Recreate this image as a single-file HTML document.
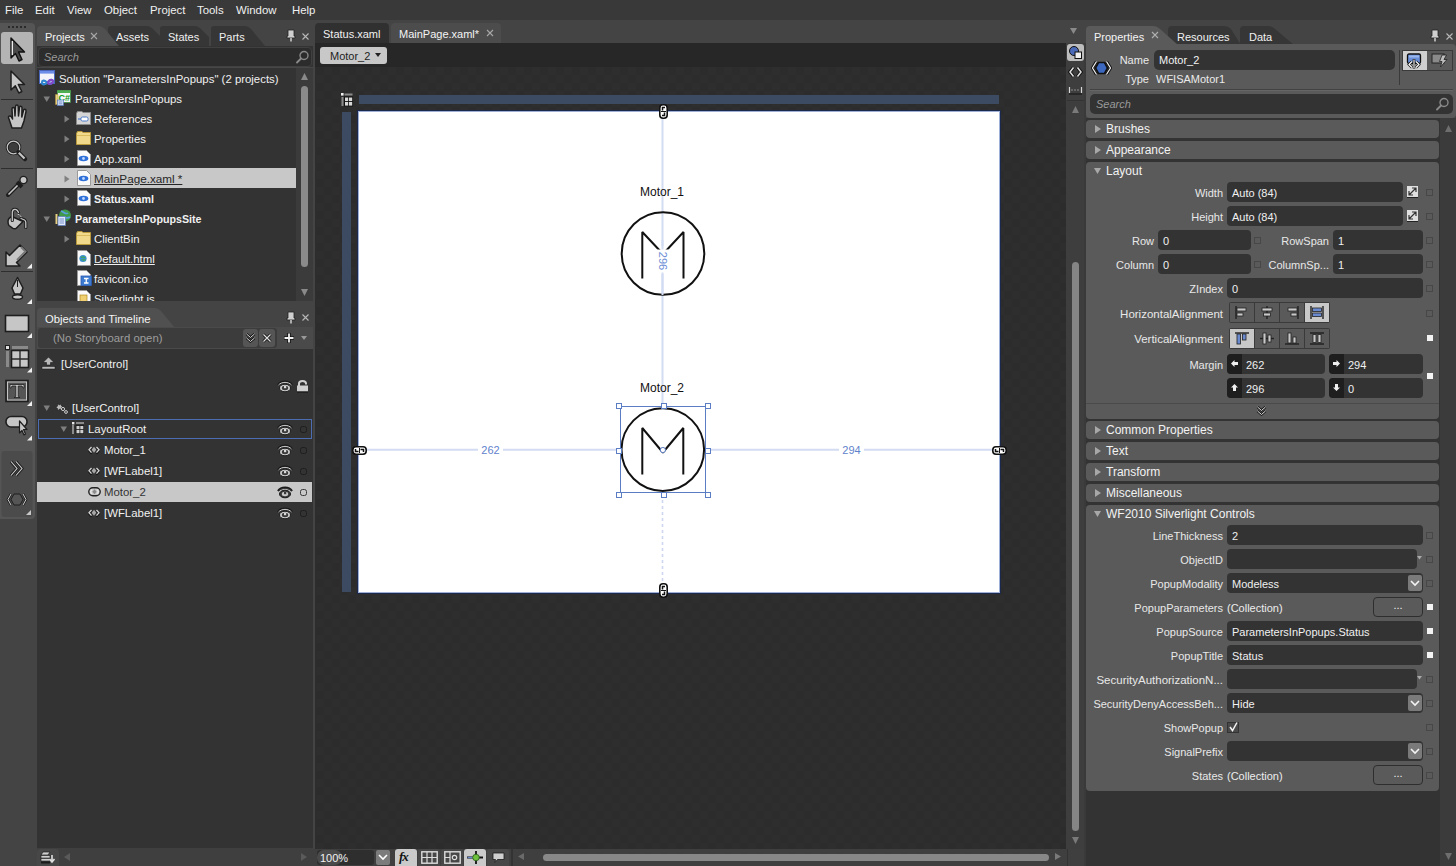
<!DOCTYPE html>
<html><head><meta charset="utf-8">
<style>
*{box-sizing:border-box}
body{margin:0;width:1456px;height:866px;overflow:hidden;background:#444444;font-family:"Liberation Sans",sans-serif;font-size:11px;color:#f0f0f0;position:relative}
.a{position:absolute}
.t{position:absolute;white-space:nowrap;line-height:14px}
.menu span{position:absolute;top:3px;line-height:14px;color:#f0f0f0;font-size:11.4px}
.chk{background-color:#2c2c2c;background-image:linear-gradient(45deg,#2e2e2e 25%,transparent 25%,transparent 75%,#2e2e2e 75%),linear-gradient(45deg,#2e2e2e 25%,transparent 25%,transparent 75%,#2e2e2e 75%);background-size:16px 16px;background-position:1px 0,9px 8px}
</style></head><body>

<!-- menu bar -->
<div class="a menu" style="left:0;top:0;width:1456px;height:20px;background:#393939">
<span style="left:5px">File</span><span style="left:35px">Edit</span><span style="left:67px">View</span><span style="left:104px">Object</span><span style="left:150px">Project</span><span style="left:197px">Tools</span><span style="left:236px">Window</span><span style="left:292px">Help</span>
</div>

<!-- left toolbar -->
<div class="a" style="left:0;top:23px;width:35px;height:496px;background:#555555;border-radius:0 4px 4px 0"></div>
<svg class="a" style="left:0;top:0" width="36" height="520" viewBox="0 0 36 520">
<g fill="#2a2a2a"><rect x="8" y="26" width="2" height="2"/><rect x="12" y="26" width="2" height="2"/><rect x="16" y="26" width="2" height="2"/><rect x="20" y="26" width="2" height="2"/><rect x="24" y="26" width="2" height="2"/></g>
<rect x="1" y="32" width="32" height="32" rx="3" fill="#b4b4b4"/>
<path d="M11 38 L11 58 L15.5 53.5 L19 61 L22 59.5 L18.5 52 L24.5 52 Z" fill="#4a4a4a" stroke="#111" stroke-width="1.4" stroke-linejoin="round"/>
<path d="M12.3 41 L12.3 55" stroke="#fff" stroke-width="1.2"/>
<path d="M11 71 L11 90 L15.3 85.8 L18.8 93 L21.8 91.5 L18.3 84.5 L24.5 84.5 Z" fill="#c6c6c6" stroke="#1e1e1e" stroke-width="1.5" stroke-linejoin="round"/>
<rect x="1" y="99" width="32" height="1" fill="#2e2e2e"/>
<path d="M12 128 L9 119 C7.5 116 10 115 11.5 117 L12.5 119 L12 109 C12 107 14.5 107 14.6 109 L15 116 L15.5 106.5 C15.7 104.5 18 104.5 18.2 106.5 L18.5 116 L19.5 107.5 C19.8 105.5 22 105.8 22 108 L21.8 117 L23.5 110.5 C24 108.5 26.5 109 26 111.5 L24 121 L21.5 128 Z" fill="#c6c6c6" stroke="#1e1e1e" stroke-width="1.5" stroke-linejoin="round"/>
<circle cx="13.5" cy="147.5" r="6.3" fill="#3c3c3c" stroke="#1e1e1e" stroke-width="3"/>
<circle cx="13.5" cy="147.5" r="6.3" fill="none" stroke="#c6c6c6" stroke-width="1.2"/>
<path d="M18.5 152.5 L25 159" stroke="#1e1e1e" stroke-width="4.5" stroke-linecap="round"/>
<path d="M18.8 152.8 L24.5 158.5" stroke="#c6c6c6" stroke-width="2.2"/>
<rect x="1" y="168" width="32" height="1" fill="#2e2e2e"/>
<path d="M8 195 L19 184" stroke="#1e1e1e" stroke-width="4" stroke-linecap="round"/>
<path d="M8.5 194.5 L19 184" stroke="#c6c6c6" stroke-width="1.6"/>
<path d="M17 182 L22 187" stroke="#1e1e1e" stroke-width="4"/>
<circle cx="23.5" cy="180" r="3.6" fill="#c6c6c6" stroke="#1e1e1e" stroke-width="1.4"/>
<path d="M21 218.5 L24.5 220 C25.5 220.5 25.8 221.5 25.8 222.5 L25.8 227.5" fill="none" stroke="#1e1e1e" stroke-width="3.2" stroke-linecap="round"/>
<path d="M21 218.5 L24.5 220 C25.5 220.5 25.8 221.5 25.8 222.5 L25.8 227.5" fill="none" stroke="#c6c6c6" stroke-width="1.3" stroke-linecap="round"/>
<path d="M8 221.5 C8 219 9.5 217.5 12 216.5 L23 221.5 L16.5 228 C15.5 229 14 229 12.5 228.2 L9 225.5 C8.3 224.5 8 223 8 221.5 Z" fill="#c6c6c6" stroke="#1e1e1e" stroke-width="1.5" stroke-linejoin="round"/>
<path d="M12.3 220.5 L12.3 212.5 C12.3 208.5 17 208 18.5 212.5" fill="none" stroke="#1e1e1e" stroke-width="3.2" stroke-linecap="round"/>
<path d="M12.3 220.5 L12.3 212.5 C12.3 208.5 17 208 18.5 212.5" fill="none" stroke="#c6c6c6" stroke-width="1.3" stroke-linecap="round"/>
<path d="M17.5 214 L19.5 215 M20 215.8 L21.5 216.8" stroke="#c6c6c6" stroke-width="1"/>
<path d="M6 262 L6 252 L9.5 255.5 L20 245 L27 252 L16.5 262.5 L20 266 L6 266 Z" fill="#c6c6c6" stroke="#1e1e1e" stroke-width="1.5" stroke-linejoin="round"/>
<path d="M21 247 L25.5 251.5 L17 260" fill="none" stroke="#777" stroke-width="2"/>
<path d="M32 263.5 L32 268.5 L27 268.5 Z" fill="#f0f0f0"/>
<rect x="1" y="271" width="32" height="1" fill="#2e2e2e"/>
<path d="M17.5 277.5 L23 288 L20.5 294 L14.5 294 L12 288 Z" fill="#c6c6c6" stroke="#1e1e1e" stroke-width="1.5" stroke-linejoin="round"/>
<path d="M17.5 280 L17.5 287" stroke="#1e1e1e" stroke-width="1"/>
<ellipse cx="17.5" cy="297" rx="5" ry="2.2" fill="#c6c6c6" stroke="#1e1e1e" stroke-width="1.4"/>
<path d="M32 299 L32 304 L27 304 Z" fill="#f0f0f0"/>
<rect x="5.5" y="315.5" width="23" height="16" fill="#c6c6c6" stroke="#1e1e1e" stroke-width="1.6"/>
<path d="M32 333 L32 338 L27 338 Z" fill="#f0f0f0"/>
<rect x="11.5" y="350.5" width="17" height="17" fill="#c6c6c6" stroke="#1e1e1e" stroke-width="1.6"/>
<path d="M20 351 L20 367 M12 359 L28 359" stroke="#2a2a2a" stroke-width="1.4"/>
<rect x="12" y="346" width="16" height="3" fill="#8a8a8a"/>
<rect x="6" y="351" width="3" height="16" fill="#8a8a8a"/>
<rect x="5.5" y="345.5" width="4" height="4" fill="#e0e0e0" stroke="#1e1e1e" stroke-width="1"/>
<path d="M32 367.5 L32 372.5 L27 372.5 Z" fill="#f0f0f0"/>
<rect x="6" y="380.5" width="22" height="21" fill="none" stroke="#1e1e1e" stroke-width="1.6"/>
<rect x="7.5" y="382" width="19" height="18" fill="none" stroke="#c6c6c6" stroke-width="1"/>
<path d="M10 384.5 L24 384.5 L24 388 L23 388 L22 386 L18.2 386 L18.2 396.5 L20 397.5 L14 397.5 L15.8 396.5 L15.8 386 L12 386 L11 388 L10 388 Z" fill="#c6c6c6" stroke="#1e1e1e" stroke-width="0.8"/>
<path d="M32 401 L32 406 L27 406 Z" fill="#f0f0f0"/>
<rect x="6" y="416.5" width="21" height="10.5" rx="5" fill="#c6c6c6" stroke="#1e1e1e" stroke-width="1.6"/>
<path d="M19.5 421 L19.5 433 L22 430.5 L24 435 L25.5 434 L23.5 429.5 L27 429.5 Z" fill="#c6c6c6" stroke="#1e1e1e" stroke-width="1.2" stroke-linejoin="round"/>
<path d="M32 435.5 L32 440.5 L27 440.5 Z" fill="#f0f0f0"/>
<rect x="1.5" y="451" width="31" height="66" rx="3" fill="#4b4b4b"/>
<path d="M11 461.5 L17 468.5 L11 475.5 M16 461.5 L22 468.5 L16 475.5" fill="none" stroke="#1e1e1e" stroke-width="3"/>
<path d="M11 461.5 L17 468.5 L11 475.5 M16 461.5 L22 468.5 L16 475.5" fill="none" stroke="#d0d0d0" stroke-width="1.1"/>
<path d="M11 499.5 L14 494 L20 494 L23 499.5 L20 505 L14 505 Z" fill="#555" stroke="#1e1e1e" stroke-width="1"/>
<path d="M11 494 L8 499.5 L11 505 M23 494 L26 499.5 L23 505" fill="none" stroke="#1e1e1e" stroke-width="2.6"/>
<path d="M11 494 L8 499.5 L11 505 M23 494 L26 499.5 L23 505" fill="none" stroke="#d0d0d0" stroke-width="1"/>
<path d="M31 510 L31 515 L26 515 Z" fill="#c8c8c8"/>
</svg>

<!-- Projects panel -->
<div class="a" style="left:37px;top:46px;width:276px;height:255px;background:#333333"></div>
<svg class="a" style="left:37px;top:25px" width="240" height="22" viewBox="0 0 240 22">
<path d="M71 21 L71 4 Q71 1 74 1 L110 1 Q113 1 116 4 L124 12 L124 21 Z" fill="#363636"/>
<path d="M123 21 L123 4 Q123 1 126 1 L158 1 Q161 1 164 4 L172 12 L172 21 Z" fill="#363636"/>
<path d="M174 21 L174 4 Q174 1 177 1 L208 1 Q211 1 214 4 L228 21 Z" fill="#363636"/>
<path d="M0 21 L0 5 Q0 1 4 1 L62 1 Q65 1 68 4 L82 21 Z" fill="#505050"/>
</svg>
<div class="t" style="left:45px;top:30px;color:#f4f4f4">Projects</div>
<svg class="a" style="left:90px;top:32px" width="8" height="8"><path d="M1 1 L7 7 M7 1 L1 7" stroke="#a8a8a8" stroke-width="1.1"/></svg>
<div class="t" style="left:116px;top:30px;color:#f0f0f0">Assets</div>
<div class="t" style="left:168px;top:30px;color:#f0f0f0">States</div>
<div class="t" style="left:219px;top:30px;color:#f0f0f0">Parts</div>
<svg class="a" style="left:286px;top:29px" width="10" height="13" viewBox="0 0 10 13"><path d="M2 1 L8 1 L8 7 L9 7 L9 9 L1 9 L1 7 L2 7 Z" fill="#d0d0d0" stroke="#222" stroke-width="0.8"/><path d="M5 9 L5 12.5" stroke="#d0d0d0" stroke-width="1.5"/></svg>
<svg class="a" style="left:301px;top:32px" width="9" height="9"><path d="M1.5 1.5 L7.5 7.5 M7.5 1.5 L1.5 7.5" stroke="#b8b8b8" stroke-width="1.1"/></svg>
<div class="a" style="left:38px;top:47px;width:274px;height:20px;background:#2c2c2c;border:1px solid #404040;border-radius:4px"></div>
<div class="a" style="left:37px;top:67px;width:276px;height:1px;background:#474747"></div>
<div class="t" style="left:44px;top:50px;color:#9a9a9a;font-style:italic">Search</div>
<svg class="a" style="left:296px;top:50px" width="13" height="14" viewBox="0 0 13 14"><circle cx="8" cy="5.5" r="4" fill="none" stroke="#8a8a8a" stroke-width="1.4"/><path d="M5 8.5 L1 12.5" stroke="#8a8a8a" stroke-width="1.8" stroke-linecap="round"/></svg>
<div class="a" style="left:296px;top:68px;width:17px;height:233px;background:#3b3b3b"></div>
<svg class="a" style="left:301px;top:73px" width="8" height="8"><path d="M0 7 L3.5 0 L7 7 Z" fill="#8a8a8a"/></svg>
<div class="a" style="left:301px;top:86px;width:7px;height:181px;background:#8a8a8a;border-radius:3.5px"></div>
<svg class="a" style="left:301px;top:289px" width="8" height="8"><path d="M0 0 L7 0 L3.5 7 Z" fill="#8a8a8a"/></svg>
<div class="a" style="left:37px;top:168px;width:259px;height:20px;background:#c8c8c8"></div>
<div class="a" style="left:37px;top:68px;width:259px;height:233px;overflow:hidden;font-size:11.4px">
<svg class="a" style="left:2px;top:2px" width="17" height="17" viewBox="0 0 17 17"><rect x="0.5" y="0.5" width="15" height="13" fill="#f2f4fa" stroke="#4a64b8"/><rect x="1" y="1" width="14" height="2.6" fill="#6d8ee8"/><path d="M3 12.5 C3 10.3 5.5 10 7.5 12 C9.5 14 12 14.5 13.5 12.5 C15 10.5 12.5 9 10.5 10.5 L8.5 12.5 C6 15 3 14.8 3 12.5 Z" fill="none" stroke="#2f86d0" stroke-width="2.2"/><path d="M8.5 12.5 L10.5 10.5 C12.5 9 15 10.5 13.5 12.5 C12 14.5 9.5 14 8.5 12.8" fill="none" stroke="#8248c8" stroke-width="2.2"/></svg>
<div class="t" style="left:22px;top:4px">Solution "ParametersInPopups" (2 projects)</div>
<svg class="a" style="left:6px;top:28px" width="8" height="7"><path d="M0.5 0.5 L7 0.5 L3.75 6 Z" fill="#7e7e7e"/></svg>
<svg class="a" style="left:18px;top:22px" width="16" height="16" viewBox="0 0 16 16"><rect x="2.5" y="0.5" width="13" height="12" fill="#f4f8f4" stroke="#3f8a3f" stroke-width="0.8"/><rect x="2.5" y="0.5" width="13" height="2.5" fill="#4fae4f"/><text x="3.6" y="10.5" font-family="Liberation Sans" font-weight="bold" font-size="9" fill="#129a12">C#</text><path d="M0.5 4.5 L3 4.5 L3 14.5 L0.5 14.5 Z" fill="#e6cf80" stroke="#b8983c" stroke-width="0.5"/><rect x="2.5" y="10" width="6" height="5.5" fill="#d0dcf2" stroke="#5a7ac0" stroke-width="0.7"/><path d="M3.8 12 L7.2 12 M3.8 13.8 L7.2 13.8" stroke="#5a7ac0" stroke-width="0.7"/></svg>
<div class="t" style="left:38px;top:24px">ParametersInPopups</div>
<svg class="a" style="left:27px;top:47px" width="7" height="8"><path d="M0.5 0.5 L5.5 4 L0.5 7.5 Z" fill="#7e7e7e"/></svg>
<svg class="a" style="left:39px;top:43px" width="15" height="14" viewBox="0 0 15 14"><path d="M0.5 2.5 L0.5 13.5 L14.5 13.5 L14.5 1.5 L7 1.5 L6 0.5 L1.5 0.5 Z" fill="#d4d4d4" stroke="#8a8a8a"/><rect x="5" y="6" width="7" height="4" rx="1.5" fill="#fff" stroke="#4a7ac8"/><path d="M2 8 L5 8" stroke="#4a7ac8" stroke-width="1.2"/></svg>
<div class="t" style="left:57px;top:44px">References</div>
<svg class="a" style="left:27px;top:67px" width="7" height="8"><path d="M0.5 0.5 L5.5 4 L0.5 7.5 Z" fill="#7e7e7e"/></svg>
<svg class="a" style="left:39px;top:63px" width="15" height="14" viewBox="0 0 15 14"><path d="M0.5 2.5 L0.5 13.5 L14.5 13.5 L14.5 1.5 L7 1.5 L6 0.5 L1.5 0.5 Z" fill="#f0d98a" stroke="#b89a3c"/><path d="M1 4.5 L14 4.5" stroke="#d8bb5c"/></svg>
<div class="t" style="left:57px;top:64px">Properties</div>
<svg class="a" style="left:27px;top:87px" width="7" height="8"><path d="M0.5 0.5 L5.5 4 L0.5 7.5 Z" fill="#7e7e7e"/></svg>
<svg class="a" style="left:40px;top:82px" width="14" height="16" viewBox="0 0 14 16"><path d="M0.5 0.5 L9.5 0.5 L13.5 4.5 L13.5 15.5 L0.5 15.5 Z" fill="#fafafa" stroke="#9a9a9a"/><ellipse cx="6.5" cy="8.5" rx="4.8" ry="2.8" fill="#2f6fd8"/><circle cx="6.5" cy="8.5" r="1.4" fill="#bcd8ff"/></svg>
<div class="t" style="left:57px;top:84px">App.xaml</div>
<svg class="a" style="left:27px;top:107px" width="7" height="8"><path d="M0.5 0.5 L5.5 4 L0.5 7.5 Z" fill="#808080"/></svg>
<svg class="a" style="left:40px;top:102px" width="14" height="16" viewBox="0 0 14 16"><path d="M0.5 0.5 L9.5 0.5 L13.5 4.5 L13.5 15.5 L0.5 15.5 Z" fill="#fafafa" stroke="#9a9a9a"/><ellipse cx="6.5" cy="8.5" rx="4.8" ry="2.8" fill="#2f6fd8"/><circle cx="6.5" cy="8.5" r="1.4" fill="#bcd8ff"/></svg>
<div class="t" style="left:57px;top:104px;color:#262626;text-decoration:underline;font-size:11.7px">MainPage.xaml *</div>
<svg class="a" style="left:27px;top:127px" width="7" height="8"><path d="M0.5 0.5 L5.5 4 L0.5 7.5 Z" fill="#7e7e7e"/></svg>
<svg class="a" style="left:40px;top:122px" width="14" height="16" viewBox="0 0 14 16"><path d="M0.5 0.5 L9.5 0.5 L13.5 4.5 L13.5 15.5 L0.5 15.5 Z" fill="#fafafa" stroke="#9a9a9a"/><ellipse cx="6.5" cy="8.5" rx="4.8" ry="2.8" fill="#2f6fd8"/><circle cx="6.5" cy="8.5" r="1.4" fill="#bcd8ff"/></svg>
<div class="t" style="left:57px;top:124px;font-weight:bold;font-size:10.7px">Status.xaml</div>
<svg class="a" style="left:6px;top:148px" width="8" height="7"><path d="M0.5 0.5 L7 0.5 L3.75 6 Z" fill="#7e7e7e"/></svg>
<svg class="a" style="left:18px;top:141px" width="16" height="17" viewBox="0 0 16 17"><circle cx="10" cy="6.5" r="6" fill="#3f9a4a"/><path d="M6 2 C9 3 11 6 13 4 M8 9 C10 8 12 10 15 8" stroke="#5aa0e0" stroke-width="1.6" fill="none"/><path d="M0.5 5 L2.5 5 L2.5 15 L0.5 15Z" fill="#e6cf80"/><rect x="3" y="7.5" width="7.5" height="9" fill="#dfe8f8" stroke="#5a7ac0" stroke-width="0.7"/><path d="M4.5 10 L9 10 M4.5 12 L9 12 M4.5 14 L9 14" stroke="#5a7ac0" stroke-width="0.8"/></svg>
<div class="t" style="left:38px;top:144px;font-weight:bold;font-size:10.7px">ParametersInPopupsSite</div>
<svg class="a" style="left:27px;top:167px" width="7" height="8"><path d="M0.5 0.5 L5.5 4 L0.5 7.5 Z" fill="#7e7e7e"/></svg>
<svg class="a" style="left:39px;top:163px" width="15" height="14" viewBox="0 0 15 14"><path d="M0.5 2.5 L0.5 13.5 L14.5 13.5 L14.5 1.5 L7 1.5 L6 0.5 L1.5 0.5 Z" fill="#f0d98a" stroke="#b89a3c"/><path d="M1 4.5 L14 4.5" stroke="#d8bb5c"/></svg>
<div class="t" style="left:57px;top:164px">ClientBin</div>
<svg class="a" style="left:40px;top:182px" width="14" height="16" viewBox="0 0 14 16"><path d="M0.5 0.5 L9.5 0.5 L13.5 4.5 L13.5 15.5 L0.5 15.5 Z" fill="#fafafa" stroke="#9a9a9a"/><circle cx="6" cy="8.5" r="3.6" fill="#3a8fd0"/><path d="M4 7 C5 8 7 6 8 8 M4.5 10 C6 9 7 11 8.5 9.5" stroke="#48a848" stroke-width="1.2" fill="none"/></svg>
<div class="t" style="left:57px;top:184px;text-decoration:underline">Default.html</div>
<svg class="a" style="left:40px;top:202px" width="15" height="16" viewBox="0 0 15 16"><path d="M0.5 0.5 L9.5 0.5 L13.5 4.5 L13.5 15.5 L0.5 15.5 Z" fill="#fafafa" stroke="#9a9a9a"/><rect x="4" y="6" width="10.5" height="9.5" fill="#3d7bd0" stroke="#2a5ab0" stroke-width="0.8"/><path d="M7 8.5 L11.5 8.5 M9.25 8.5 L9.25 13 M7 13 L11.5 13" stroke="#fff" stroke-width="1.3"/></svg>
<div class="t" style="left:57px;top:204px">favicon.ico</div>
<svg class="a" style="left:40px;top:222px" width="14" height="16" viewBox="0 0 14 16"><path d="M0.5 0.5 L9.5 0.5 L13.5 4.5 L13.5 15.5 L0.5 15.5 Z" fill="#fafafa" stroke="#9a9a9a"/><rect x="3" y="5" width="7" height="8" fill="#f0d070" stroke="#b08a20" stroke-width="0.7"/></svg>
<div class="t" style="left:57px;top:224px">Silverlight.js</div>
</div>

<!-- Objects panel -->
<svg class="a" style="left:37px;top:307px" width="140" height="21" viewBox="0 0 140 21"><path d="M0 21 L0 5 Q0 1 4 1 L118 1 Q121 1 124 4 L138 21 Z" fill="#505050"/></svg>
<div class="t" style="left:45px;top:312px;color:#f4f4f4;font-size:11.3px">Objects and Timeline</div>
<svg class="a" style="left:286px;top:311px" width="10" height="13" viewBox="0 0 10 13"><path d="M2 1 L8 1 L8 7 L9 7 L9 9 L1 9 L1 7 L2 7 Z" fill="#d0d0d0" stroke="#222" stroke-width="0.8"/><path d="M5 9 L5 12.5" stroke="#d0d0d0" stroke-width="1.5"/></svg>
<svg class="a" style="left:301px;top:313px" width="9" height="9"><path d="M1.5 1.5 L7.5 7.5 M7.5 1.5 L1.5 7.5" stroke="#b8b8b8" stroke-width="1.1"/></svg>
<div class="a" style="left:37px;top:327px;width:276px;height:22px;background:#4a4a4a"></div>
<div class="a" style="left:38px;top:328px;width:239px;height:20px;background:#3c3c3c;border-radius:3px"></div>
<div class="t" style="left:53px;top:331px;color:#9c9c9c;font-size:11.4px">(No Storyboard open)</div>
<div class="a" style="left:243px;top:329px;width:15px;height:18px;background:#555;border-radius:3px"></div>
<div class="a" style="left:259px;top:329px;width:16px;height:18px;background:#555;border-radius:3px"></div>
<svg class="a" style="left:245px;top:333px" width="11" height="10" viewBox="0 0 11 10"><path d="M1.5 1 L5.5 4.5 L9.5 1 M1.5 5 L5.5 8.5 L9.5 5" fill="none" stroke="#161616" stroke-width="2.4"/><path d="M1.5 1 L5.5 4.5 L9.5 1 M1.5 5 L5.5 8.5 L9.5 5" fill="none" stroke="#e0e0e0" stroke-width="1"/></svg>
<svg class="a" style="left:262px;top:333px" width="10" height="10"><path d="M1.5 1.5 L8.5 8.5 M8.5 1.5 L1.5 8.5" stroke="#161616" stroke-width="3"/><path d="M1.5 1.5 L8.5 8.5 M8.5 1.5 L1.5 8.5" stroke="#e0e0e0" stroke-width="1.2"/></svg>
<svg class="a" style="left:283px;top:332px" width="12" height="12"><path d="M6 1 L6 11 M1 6 L11 6" stroke="#161616" stroke-width="3.6"/><path d="M6 1.5 L6 10.5 M1.5 6 L10.5 6" stroke="#f0f0f0" stroke-width="1.8"/></svg>
<svg class="a" style="left:301px;top:336px" width="7" height="5"><path d="M0 0 L6 0 L3 4 Z" fill="#999"/></svg>
<div class="a" style="left:37px;top:349px;width:276px;height:499px;background:#333333"></div>
<svg class="a" style="left:41px;top:356px" width="15" height="14" viewBox="0 0 15 14"><path d="M7.5 1 L13 6.5 L9.5 6.5 L9.5 9 L5.5 9 L5.5 6.5 L2 6.5 Z" fill="#b8b8b8" stroke="#1a1a1a" stroke-width="0.6"/><rect x="1" y="10.5" width="13" height="2.5" fill="#b8b8b8" stroke="#1a1a1a" stroke-width="0.5"/></svg>
<div class="t" style="left:61px;top:357px;font-size:11.4px">[UserControl]</div>
<svg class="a" style="left:277px;top:380px" width="16" height="13" viewBox="0 0 16 13"><path d="M1 5 C4 0.5 12 0.5 15 5" fill="none" stroke="#1a1a1a" stroke-width="2.2"/><path d="M1.5 5 C4.5 1.5 11.5 1.5 14.5 5" fill="none" stroke="#cfcfcf" stroke-width="1"/><ellipse cx="8" cy="8" rx="5.5" ry="3.8" fill="#cfcfcf" stroke="#1a1a1a" stroke-width="1"/><ellipse cx="8" cy="8" rx="3.2" ry="2.2" fill="#3a3a3a"/><rect x="7" y="6" width="2.2" height="2.2" fill="#d8d8d8"/></svg>
<svg class="a" style="left:296px;top:379px" width="13" height="14" viewBox="0 0 13 14"><path d="M3 7 L3 4.5 C3 1 10 1 10 4.5 L10 5.5" fill="none" stroke="#d0d0d0" stroke-width="2"/><rect x="1" y="6.5" width="11" height="6" fill="#d0d0d0"/><rect x="1" y="12.5" width="11" height="1.2" fill="#1a1a1a"/></svg>
<svg class="a" style="left:43px;top:405px" width="8" height="7"><path d="M0.5 0.5 L7 0.5 L3.75 6 Z" fill="#7e7e7e"/></svg>
<svg class="a" style="left:56px;top:402px" width="12" height="12" viewBox="0 0 12 12"><path d="M2 1 L3 3 L5 2 L5.5 4 L7 4.5 L5 6 L6 8 L3.5 7 L2 9 L1.5 6.5 L0 5.5 L1.5 4 Z" fill="#bbb" stroke="#1a1a1a" stroke-width="0.6"/><circle cx="7" cy="7" r="1.6" fill="none" stroke="#ccc" stroke-width="1"/><circle cx="10" cy="10" r="1.4" fill="none" stroke="#ccc" stroke-width="1"/></svg>
<div class="t" style="left:72px;top:401px;font-size:11.4px">[UserControl]</div>
<div class="a" style="left:38px;top:419px;width:274px;height:20px;border:1.2px solid #4d6db3"></div>
<svg class="a" style="left:60px;top:426px" width="8" height="7"><path d="M0.5 0.5 L7 0.5 L3.75 6 Z" fill="#7e7e7e"/></svg>
<svg class="a" style="left:72px;top:422px" width="12" height="13" viewBox="0 0 12 13"><rect x="4" y="0" width="8" height="2" fill="#8a8a8a"/><rect x="0" y="3" width="2" height="9" fill="#8a8a8a"/><rect x="0" y="0" width="2.4" height="2.4" fill="#e8e8e8"/><rect x="3.5" y="3" width="8.5" height="9" fill="#1e1e1e"/><rect x="4.5" y="4" width="3" height="3.2" fill="#cfcfcf"/><rect x="8.3" y="4" width="3" height="3.2" fill="#cfcfcf"/><rect x="4.5" y="8" width="3" height="3.2" fill="#cfcfcf"/><rect x="8.3" y="8" width="3" height="3.2" fill="#cfcfcf"/></svg>
<div class="t" style="left:88px;top:422px;font-size:11.4px">LayoutRoot</div>
<svg class="a" style="left:277px;top:423px" width="16" height="13" viewBox="0 0 16 13"><path d="M1 5 C4 0.5 12 0.5 15 5" fill="none" stroke="#1a1a1a" stroke-width="2.2"/><path d="M1.5 5 C4.5 1.5 11.5 1.5 14.5 5" fill="none" stroke="#cfcfcf" stroke-width="1"/><ellipse cx="8" cy="8" rx="5.5" ry="3.8" fill="#cfcfcf" stroke="#1a1a1a" stroke-width="1"/><ellipse cx="8" cy="8" rx="3.2" ry="2.2" fill="#3a3a3a"/><rect x="7" y="6" width="2.2" height="2.2" fill="#d8d8d8"/></svg><div class="a" style="left:300px;top:426px;width:7px;height:7px;border:1.3px solid #1e1e1e;border-radius:2.5px"></div>
<svg class="a" style="left:88px;top:446px" width="12" height="9" viewBox="0 0 12 9"><path d="M3.5 1.3 L1 4 L3.5 6.7 M8.5 1.3 L11 4 L8.5 6.7" fill="none" stroke="#111" stroke-width="1.6" transform="translate(0 1)"/><path d="M3.5 1 L1 3.8 L3.5 6.6 M8.5 1 L11 3.8 L8.5 6.6" fill="none" stroke="#d4d4d4" stroke-width="1.3"/><path d="M6 0.8 L8.3 3.8 L6 6.8 L3.7 3.8 Z" fill="#a8a8a8"/></svg>
<div class="t" style="left:104px;top:443px;font-size:11.4px">Motor_1</div>
<svg class="a" style="left:277px;top:444px" width="16" height="13" viewBox="0 0 16 13"><path d="M1 5 C4 0.5 12 0.5 15 5" fill="none" stroke="#1a1a1a" stroke-width="2.2"/><path d="M1.5 5 C4.5 1.5 11.5 1.5 14.5 5" fill="none" stroke="#cfcfcf" stroke-width="1"/><ellipse cx="8" cy="8" rx="5.5" ry="3.8" fill="#cfcfcf" stroke="#1a1a1a" stroke-width="1"/><ellipse cx="8" cy="8" rx="3.2" ry="2.2" fill="#3a3a3a"/><rect x="7" y="6" width="2.2" height="2.2" fill="#d8d8d8"/></svg><div class="a" style="left:300px;top:447px;width:7px;height:7px;border:1.3px solid #1e1e1e;border-radius:2.5px"></div><svg class="a" style="left:88px;top:467px" width="12" height="9" viewBox="0 0 12 9"><path d="M3.5 1.3 L1 4 L3.5 6.7 M8.5 1.3 L11 4 L8.5 6.7" fill="none" stroke="#111" stroke-width="1.6" transform="translate(0 1)"/><path d="M3.5 1 L1 3.8 L3.5 6.6 M8.5 1 L11 3.8 L8.5 6.6" fill="none" stroke="#d4d4d4" stroke-width="1.3"/><path d="M6 0.8 L8.3 3.8 L6 6.8 L3.7 3.8 Z" fill="#a8a8a8"/></svg>
<div class="t" style="left:104px;top:464px;font-size:11.4px">[WFLabel1]</div>
<svg class="a" style="left:277px;top:465px" width="16" height="13" viewBox="0 0 16 13"><path d="M1 5 C4 0.5 12 0.5 15 5" fill="none" stroke="#1a1a1a" stroke-width="2.2"/><path d="M1.5 5 C4.5 1.5 11.5 1.5 14.5 5" fill="none" stroke="#cfcfcf" stroke-width="1"/><ellipse cx="8" cy="8" rx="5.5" ry="3.8" fill="#cfcfcf" stroke="#1a1a1a" stroke-width="1"/><ellipse cx="8" cy="8" rx="3.2" ry="2.2" fill="#3a3a3a"/><rect x="7" y="6" width="2.2" height="2.2" fill="#d8d8d8"/></svg><div class="a" style="left:300px;top:468px;width:7px;height:7px;border:1.3px solid #1e1e1e;border-radius:2.5px"></div>
<div class="a" style="left:37px;top:482px;width:275px;height:20px;background:#c8c8c8"></div>
<svg class="a" style="left:88px;top:487px" width="13" height="10" viewBox="0 0 13 10"><rect x="0.8" y="0.8" width="11.4" height="8" rx="4" fill="none" stroke="#222" stroke-width="1.4"/><path d="M4 2.5 L2.5 4.8 L4 7 M9 2.5 L10.5 4.8 L9 7" fill="none" stroke="#e8e8e8" stroke-width="1.2"/><path d="M6.5 2.3 L8.6 4.8 L6.5 7.3 L4.4 4.8 Z" fill="#8a8a8a"/></svg>
<div class="t" style="left:104px;top:485px;color:#333;font-size:11.4px">Motor_2</div>
<svg class="a" style="left:277px;top:486px" width="16" height="13" viewBox="0 0 16 13"><path d="M1 5 C4 0.5 12 0.5 15 5" fill="none" stroke="#1a1a1a" stroke-width="2.2"/><path d="M1.5 5 C4.5 1.5 11.5 1.5 14.5 5" fill="none" stroke="#3a3a3a" stroke-width="1"/><ellipse cx="8" cy="8" rx="5.5" ry="3.8" fill="#3a3a3a" stroke="#1a1a1a" stroke-width="1"/><ellipse cx="8" cy="8" rx="3.2" ry="2.2" fill="#c8c8c8"/><rect x="7" y="6" width="2.2" height="2.2" fill="#3a3a3a"/></svg><div class="a" style="left:300px;top:489px;width:7px;height:7px;border:1.3px solid #3a3a3a;border-radius:2.5px"></div><svg class="a" style="left:88px;top:509px" width="12" height="9" viewBox="0 0 12 9"><path d="M3.5 1.3 L1 4 L3.5 6.7 M8.5 1.3 L11 4 L8.5 6.7" fill="none" stroke="#111" stroke-width="1.6" transform="translate(0 1)"/><path d="M3.5 1 L1 3.8 L3.5 6.6 M8.5 1 L11 3.8 L8.5 6.6" fill="none" stroke="#d4d4d4" stroke-width="1.3"/><path d="M6 0.8 L8.3 3.8 L6 6.8 L3.7 3.8 Z" fill="#a8a8a8"/></svg>
<div class="t" style="left:104px;top:506px;font-size:11.4px">[WFLabel1]</div>
<svg class="a" style="left:277px;top:507px" width="16" height="13" viewBox="0 0 16 13"><path d="M1 5 C4 0.5 12 0.5 15 5" fill="none" stroke="#1a1a1a" stroke-width="2.2"/><path d="M1.5 5 C4.5 1.5 11.5 1.5 14.5 5" fill="none" stroke="#cfcfcf" stroke-width="1"/><ellipse cx="8" cy="8" rx="5.5" ry="3.8" fill="#cfcfcf" stroke="#1a1a1a" stroke-width="1"/><ellipse cx="8" cy="8" rx="3.2" ry="2.2" fill="#3a3a3a"/><rect x="7" y="6" width="2.2" height="2.2" fill="#d8d8d8"/></svg><div class="a" style="left:300px;top:510px;width:7px;height:7px;border:1.3px solid #1e1e1e;border-radius:2.5px"></div>
<div class="a" style="left:37px;top:848px;width:276px;height:18px;background:#3f3f3f"></div>
<div class="a" style="left:37px;top:849px;width:22px;height:17px;background:#474747;border-radius:3px 3px 0 0"></div>
<svg class="a" style="left:40px;top:851px" width="16" height="13" viewBox="0 0 16 13"><path d="M3 1 L10 1 L8 4 L1 4 Z" fill="#cfcfcf" stroke="#1a1a1a" stroke-width="0.7"/><rect x="1" y="4.5" width="9" height="2.5" fill="#cfcfcf" stroke="#1a1a1a" stroke-width="0.6"/><rect x="1" y="7.5" width="9" height="2.5" fill="#cfcfcf" stroke="#1a1a1a" stroke-width="0.6"/><rect x="1" y="10.5" width="9" height="2" fill="#1a1a1a"/><path d="M12 4 L12 10 M9.5 8 L12 11 L14.5 8" fill="none" stroke="#e0e0e0" stroke-width="1.6"/></svg>
<svg class="a" style="left:64px;top:853px" width="7" height="9"><path d="M6 0 L6 8 L0 4 Z" fill="#5a5a5a"/></svg>
<svg class="a" style="left:301px;top:853px" width="7" height="9"><path d="M0 0 L0 8 L6 4 Z" fill="#5a5a5a"/></svg>

<!-- document area -->
<div class="a" style="left:315px;top:23px;width:74px;height:20px;background:#303030;border-radius:4px 4px 0 0"></div>
<div class="t" style="left:323px;top:27px;color:#f0f0f0">Status.xaml</div>
<div class="a" style="left:391px;top:23px;width:110px;height:20px;background:#4c4c4c;border-radius:4px 4px 0 0"></div>
<div class="t" style="left:399px;top:27px;color:#f4f4f4">MainPage.xaml*</div>
<svg class="a" style="left:486px;top:29px" width="8" height="8"><path d="M1 1 L7 7 M7 1 L1 7" stroke="#a8a8a8" stroke-width="1.1"/></svg>
<svg class="a" style="left:1070px;top:28px" width="8" height="7"><path d="M0 0 L7 0 L3.5 6 Z" fill="#8a8a8a"/></svg>
<div class="a" style="left:315px;top:43px;width:752px;height:24px;background:#272727"></div>
<div class="a" style="left:320px;top:47px;width:67px;height:17px;background:#c8c8c8;border-radius:3px"></div>
<div class="t" style="left:330px;top:49px;color:#1e1e1e">Motor_2</div>
<svg class="a" style="left:375px;top:53px" width="7" height="5"><path d="M0 0 L6 0 L3 4 Z" fill="#222"/></svg>
<div class="a chk" style="left:315px;top:67px;width:752px;height:782px"></div>
<svg class="a" style="left:341px;top:93px" width="12" height="14" viewBox="0 0 12 14"><rect x="3.5" y="0.5" width="8" height="2" fill="#8a8a8a"/><rect x="0.5" y="4" width="2" height="9" fill="#8a8a8a"/><rect x="0" y="0" width="2.6" height="2.6" fill="#f0f0f0"/><rect x="3" y="3.5" width="9" height="10" fill="#111"/><rect x="4" y="4.5" width="3.2" height="3.6" fill="#d8d8d8"/><rect x="8" y="4.5" width="3.2" height="3.6" fill="#d8d8d8"/><rect x="4" y="9" width="3.2" height="3.6" fill="#d8d8d8"/><rect x="8" y="9" width="3.2" height="3.6" fill="#d8d8d8"/></svg>
<div class="a" style="left:359px;top:95px;width:640px;height:9px;background:#3c4a62"></div>
<div class="a" style="left:342px;top:112px;width:9px;height:480px;background:#3c4a62"></div>
<div class="a" style="left:357px;top:110px;width:644px;height:484px;background:#1b2a4c"></div>
<div class="a" style="left:358px;top:111px;width:642px;height:482px;background:#ffffff;box-shadow:inset 0 0 0 1px #9fb0d8"></div>
<svg class="a" style="left:358px;top:111px" width="642" height="482" viewBox="358 111 642 482">
<path d="M662.5 111 L662.5 405" stroke="#d2dcf2" stroke-width="2"/>
<rect x="652" y="246" width="21" height="28" fill="#fff"/>
<path d="M662.5 494 L662.5 585" stroke="#cdd8f0" stroke-width="1.6" stroke-dasharray="3 3"/>
<path d="M358 449.8 L620 449.8 M706 449.8 L1000 449.8" stroke="#d2dcf2" stroke-width="2"/>
<rect x="478" y="443" width="25" height="13" fill="#fff"/>
<rect x="839" y="443" width="25" height="13" fill="#fff"/>
<circle cx="663" cy="253.5" r="41.3" fill="none" stroke="#111" stroke-width="2"/>
<path d="M642.3 278.5 L642.3 232 L663 254 L683.5 232 L683.5 278.5" fill="none" stroke="#111" stroke-width="2" stroke-linejoin="bevel"/>
<rect x="652" y="249.5" width="21" height="23" fill="#fff"/>
<path d="M662.5 240 L662.5 249.5 M662.5 272.5 L662.5 295" stroke="#d2dcf2" stroke-width="2"/>
<circle cx="662.8" cy="449.6" r="41.3" fill="none" stroke="#111" stroke-width="2"/>
<path d="M642.3 474.5 L642.3 428 L662.9 452.5 L683.3 428 L683.3 474.5" fill="none" stroke="#111" stroke-width="2" stroke-linejoin="bevel"/>
<rect x="620.5" y="406.5" width="85" height="86" fill="none" stroke="#5b7dc4" stroke-width="1"/>
<circle cx="662.9" cy="450" r="2.6" fill="#fff" stroke="#5b7dc4" stroke-width="1"/>
</svg>
<div class="t" style="left:478px;top:443px;width:25px;text-align:center;color:#5f82cc">262</div>
<div class="t" style="left:839px;top:443px;width:25px;text-align:center;color:#5f82cc">294</div>
<div class="t" style="left:650px;top:254px;width:25px;text-align:center;color:#6a8cd4;transform:rotate(90deg)">296</div>
<div class="t" style="left:640px;top:185px;color:#111;font-size:12px">Motor_1</div>
<div class="t" style="left:640px;top:381px;color:#111;font-size:12px">Motor_2</div>
<div class="a" style="left:616.0px;top:403.0px;width:6px;height:6px;border:1px solid #5b7dc4;background:#fff"></div><div class="a" style="left:660.5px;top:403.0px;width:6px;height:6px;border:1px solid #5b7dc4;background:#fff"></div><div class="a" style="left:705.0px;top:403.0px;width:6px;height:6px;border:1px solid #5b7dc4;background:#fff"></div><div class="a" style="left:616.0px;top:447.5px;width:6px;height:6px;border:1px solid #5b7dc4;background:#fff"></div><div class="a" style="left:705.0px;top:447.5px;width:6px;height:6px;border:1px solid #5b7dc4;background:#fff"></div><div class="a" style="left:616.0px;top:492.0px;width:6px;height:6px;border:1px solid #5b7dc4;background:#fff"></div><div class="a" style="left:660.5px;top:492.0px;width:6px;height:6px;border:1px solid #5b7dc4;background:#fff"></div><div class="a" style="left:705.0px;top:492.0px;width:6px;height:6px;border:1px solid #5b7dc4;background:#fff"></div><svg class="a" style="left:659px;top:104px" width="9" height="15" viewBox="0 0 9 15"><rect x="0.8" y="0.8" width="7.4" height="13.4" rx="3.2" fill="#fff" stroke="#111" stroke-width="1.6"/><path d="M6 3.5 L3.5 3.5 L3.5 6.5 M3 11.5 L5.5 11.5 L5.5 8.5" fill="none" stroke="#111" stroke-width="1.5"/><path d="M2 7.5 L7 7.5" stroke="#111" stroke-width="1"/></svg><svg class="a" style="left:659px;top:583px" width="9" height="15" viewBox="0 0 9 15"><rect x="0.8" y="0.8" width="7.4" height="13.4" rx="3.2" fill="#fff" stroke="#111" stroke-width="1.6"/><path d="M6 3.5 L3.5 3.5 L3.5 6.5 M3 11.5 L5.5 11.5 L5.5 8.5" fill="none" stroke="#111" stroke-width="1.5"/><path d="M2 7.5 L7 7.5" stroke="#111" stroke-width="1"/></svg><svg class="a" style="left:352px;top:446px" width="15" height="9" viewBox="0 0 15 9"><rect x="0.8" y="0.8" width="13.4" height="7.4" rx="3.2" fill="#fff" stroke="#111" stroke-width="1.6"/><path d="M3.5 3 L3.5 5.5 L6.5 5.5 M11.5 6 L11.5 3.5 L8.5 3.5" fill="none" stroke="#111" stroke-width="1.5"/><path d="M7.5 2 L7.5 7" stroke="#111" stroke-width="1"/></svg><svg class="a" style="left:992px;top:446px" width="15" height="9" viewBox="0 0 15 9"><rect x="0.8" y="0.8" width="13.4" height="7.4" rx="3.2" fill="#fff" stroke="#111" stroke-width="1.6"/><path d="M3.5 3 L3.5 5.5 L6.5 5.5 M11.5 6 L11.5 3.5 L8.5 3.5" fill="none" stroke="#111" stroke-width="1.5"/><path d="M7.5 2 L7.5 7" stroke="#111" stroke-width="1"/></svg>
<div class="a" style="left:313px;top:849px;width:754px;height:17px;background:#3f3f3f"></div>
<div class="a" style="left:317px;top:850px;width:57px;height:15px;background:#2e2e2e;border-radius:3px"></div>
<div class="a" style="left:317px;top:850px;width:25px;height:15px;background:#4a4a4a;border-radius:7px"></div>
<div class="t" style="left:320px;top:851px;color:#f0f0f0">100%</div>
<div class="a" style="left:376px;top:850px;width:14px;height:15px;background:#7c7c7c;border-radius:2px"></div>
<svg class="a" style="left:378px;top:854px" width="10" height="7"><path d="M1 1 L5 5 L9 1" fill="none" stroke="#fff" stroke-width="1.6"/></svg>
<div class="a" style="left:395px;top:849px;width:22px;height:17px;background:#cacaca;border-radius:3px 3px 0 0"></div>
<div class="t" style="left:399px;top:850px;color:#111;font-family:'Liberation Serif';font-style:italic;font-weight:bold;font-size:13px;letter-spacing:-1px">fx</div>
<div class="a" style="left:418px;top:849px;width:22px;height:17px;background:#474747;border-radius:3px 3px 0 0"></div>
<svg class="a" style="left:421px;top:851px" width="17" height="13" viewBox="0 0 17 13"><rect x="0.8" y="0.8" width="15.4" height="11.4" fill="none" stroke="#ddd" stroke-width="1.4"/><path d="M6 1 L6 12 M11 1 L11 12 M1 6.5 L16 6.5" stroke="#ddd" stroke-width="1.2"/></svg>
<div class="a" style="left:441px;top:849px;width:22px;height:17px;background:#474747;border-radius:3px 3px 0 0"></div>
<svg class="a" style="left:444px;top:851px" width="17" height="13" viewBox="0 0 17 13"><rect x="0.8" y="0.8" width="15.4" height="11.4" fill="none" stroke="#ddd" stroke-width="1.4"/><path d="M6 1 L6 12 M1 6.5 L6 6.5" stroke="#ddd" stroke-width="1.2"/><circle cx="10.5" cy="6.5" r="2.2" fill="none" stroke="#ddd" stroke-width="1.2"/></svg>
<div class="a" style="left:464px;top:849px;width:22px;height:17px;background:#cacaca;border-radius:3px 3px 0 0"></div>
<svg class="a" style="left:466px;top:850px" width="18" height="15" viewBox="0 0 18 15"><path d="M1 7.5 L17 7.5 M10 1 L10 14" stroke="#111" stroke-width="1.8"/><path d="M1.5 7.5 L7 7.5" stroke="#6a8ad0" stroke-width="1.2"/><circle cx="10" cy="7.5" r="3.3" fill="#6cc03c" stroke="#2a5a1a" stroke-width="0.8"/></svg>
<div class="a" style="left:487px;top:849px;width:22px;height:17px;background:#474747;border-radius:3px 3px 0 0"></div>
<svg class="a" style="left:492px;top:852px" width="13" height="12" viewBox="0 0 13 12"><path d="M1 1 L12 1 L12 7.5 L5.5 7.5 L3 10.5 L3.5 7.5 L1 7.5 Z" fill="#cfcfcf" stroke="#1a1a1a" stroke-width="0.8"/></svg>
<div class="a" style="left:511px;top:849px;width:2px;height:17px;background:#333"></div>
<svg class="a" style="left:518px;top:853px" width="7" height="8"><path d="M6 0 L6 7 L0 3.5 Z" fill="#6a6a6a"/></svg>
<div class="a" style="left:543px;top:854px;width:506px;height:7px;background:#888;border-radius:3.5px"></div>
<svg class="a" style="left:1055px;top:853px" width="7" height="8"><path d="M0 0 L0 7 L6 3.5 Z" fill="#7a7a7a"/></svg>

<!-- mini toolbar / vscroll -->
<div class="a" style="left:1066px;top:43px;width:18px;height:806px;background:#3e3e3e"></div>
<div class="a" style="left:1067px;top:44px;width:17px;height:17px;background:#bdbdbd;border-radius:3px"></div>
<svg class="a" style="left:1068px;top:45px" width="15" height="15" viewBox="0 0 15 15"><circle cx="6" cy="6" r="4.5" fill="#4a6ab8" stroke="#111" stroke-width="1"/><rect x="7" y="7" width="6.5" height="6.5" fill="#f0f0f0" stroke="#111" stroke-width="1"/></svg>
<svg class="a" style="left:1068px;top:66px" width="15" height="12" viewBox="0 0 15 12"><path d="M5.5 1.5 L2 6 L5.5 10.5 M9.5 1.5 L13 6 L9.5 10.5" fill="none" stroke="#111" stroke-width="3.4"/><path d="M5.5 1.5 L2 6 L5.5 10.5 M9.5 1.5 L13 6 L9.5 10.5" fill="none" stroke="#e0e0e0" stroke-width="1.5"/></svg>
<svg class="a" style="left:1068px;top:85px" width="15" height="10" viewBox="0 0 15 10"><path d="M1.5 2 L1.5 8 M13.5 2 L13.5 8" stroke="#d8d8d8" stroke-width="1.2"/><path d="M3.5 5 L4.5 5 M6.5 5 L7.5 5 M9.5 5 L10.5 5" stroke="#d8d8d8" stroke-width="1.2"/><path d="M1 9 L14 9" stroke="#111" stroke-width="1"/></svg>
<div class="a" style="left:1067px;top:100px;width:17px;height:1px;background:#333"></div>
<svg class="a" style="left:1072px;top:106px" width="8" height="8"><path d="M0 7 L3.5 0 L7 7 Z" fill="#7a7a7a"/></svg>
<div class="a" style="left:1072px;top:262px;width:7px;height:569px;background:#858585;border-radius:3.5px"></div>
<svg class="a" style="left:1072px;top:837px" width="8" height="8"><path d="M0 0 L7 0 L3.5 7 Z" fill="#7a7a7a"/></svg>
<div class="a" style="left:1067px;top:849px;width:17px;height:17px;background:#3f3f3f;border-left:1px solid #333"></div>
<div class="a" style="left:1084px;top:43px;width:2px;height:823px;background:#3a3a3a"></div>

<!-- Properties panel -->
<svg class="a" style="left:1086px;top:25px" width="210" height="20" viewBox="0 0 210 20">
<path d="M82 20 L82 5 Q82 1 86 1 L138 1 Q142 1 145 4 L155 20 Z" fill="#363636"/>
<path d="M154 20 L154 5 Q154 1 158 1 L182 1 Q186 1 189 4 L208 20 Z" fill="#363636"/>
<path d="M0 20 L0 5 Q0 1 4 1 L67 1 Q71 1 74 4 L92 20 Z" fill="#5a5a5a"/>
</svg>
<div class="t" style="left:1094px;top:30px;color:#f4f4f4">Properties</div>
<svg class="a" style="left:1151px;top:31px" width="8" height="8"><path d="M1 1 L7 7 M7 1 L1 7" stroke="#b0b0b0" stroke-width="1.1"/></svg>
<div class="t" style="left:1177px;top:30px;color:#f0f0f0">Resources</div>
<div class="t" style="left:1249px;top:30px;color:#f0f0f0">Data</div>
<svg class="a" style="left:1430px;top:29px" width="10" height="13" viewBox="0 0 10 13"><path d="M2 1 L8 1 L8 7 L9 7 L9 9 L1 9 L1 7 L2 7 Z" fill="#d0d0d0" stroke="#222" stroke-width="0.8"/><path d="M5 9 L5 12.5" stroke="#d0d0d0" stroke-width="1.5"/></svg>
<svg class="a" style="left:1445px;top:32px" width="9" height="9"><path d="M1.5 1.5 L7.5 7.5 M7.5 1.5 L1.5 7.5" stroke="#b8b8b8" stroke-width="1.1"/></svg>
<div class="a" style="left:1086px;top:44px;width:370px;height:74px;background:#5a5a5a;border-radius:0 4px 4px 4px"></div>
<div class="a" style="left:1086px;top:118px;width:354px;height:748px;background:#333333"></div>
<div class="a" style="left:1440px;top:118px;width:16px;height:748px;background:#3b3b3b"></div>
<svg class="a" style="left:1445px;top:125px" width="8" height="8"><path d="M0 7 L3.5 0 L7 7 Z" fill="#6e6e6e"/></svg>
<svg class="a" style="left:1445px;top:853px" width="8" height="8"><path d="M0 0 L7 0 L3.5 7 Z" fill="#6e6e6e"/></svg>
<svg class="a" style="left:1091px;top:60px" width="21" height="16" viewBox="0 0 21 16"><path d="M4.5 8 L7.5 2.5 L13.5 2.5 L16.5 8 L13.5 13.5 L7.5 13.5 Z" fill="#3d68c0" stroke="#111" stroke-width="1.6"/><path d="M5.5 1.5 L1.5 8 L5.5 14.5 M15.5 1.5 L19.5 8 L15.5 14.5" fill="none" stroke="#111" stroke-width="3.2"/><path d="M5.5 1.5 L1.5 8 L5.5 14.5 M15.5 1.5 L19.5 8 L15.5 14.5" fill="none" stroke="#f4f4f4" stroke-width="1.2"/></svg>
<div class="t" style="right:307px;top:53px;color:#eaeaea">Name</div>
<div class="t" style="right:307px;top:72px;color:#eaeaea">Type</div>
<div class="a" style="left:1154px;top:50px;width:241px;height:20px;background:#333333;border-radius:5px"></div>
<div class="t" style="left:1159px;top:53px;color:#f4f4f4">Motor_2</div>
<div class="t" style="left:1156px;top:72px;color:#eaeaea">WFISAMotor1</div>
<div class="a" style="left:1399px;top:50px;width:1px;height:35px;background:#3a3a3a"></div>
<div class="a" style="left:1402px;top:50px;width:51px;height:21px;background:#3a3a3a"></div>
<div class="a" style="left:1403px;top:51px;width:24px;height:19px;background:#d0d0d0"></div>
<div class="a" style="left:1427px;top:51px;width:25px;height:19px;background:#5a5a5a"></div>
<svg class="a" style="left:1406px;top:53px" width="18" height="16" viewBox="0 0 18 16"><rect x="1.5" y="1" width="13" height="9.5" rx="1.5" fill="#6a8fd8" stroke="#111" stroke-width="1.3"/><rect x="3" y="2.5" width="10" height="2" fill="#9ab8ee"/><path d="M6 8.5 L3 11.5 L6 14.5 M10 8.5 L13 11.5 L10 14.5" fill="none" stroke="#111" stroke-width="2.6"/><path d="M6 8.5 L3 11.5 L6 14.5 M10 8.5 L13 11.5 L10 14.5" fill="none" stroke="#fff" stroke-width="1.2"/><path d="M8 6 L8 15.5" stroke="#111" stroke-width="2.6"/><path d="M8 6.5 L8 15" stroke="#fff" stroke-width="1.1"/></svg>
<svg class="a" style="left:1431px;top:53px" width="18" height="16" viewBox="0 0 18 16"><rect x="1" y="1" width="12" height="9" fill="#8a8a8a" stroke="#222" stroke-width="1"/><path d="M11 2 L15.5 2 L13 6.5 L16 6.5 L9.5 14 L11 8.5 L8.5 8.5 Z" fill="#bdbdbd" stroke="#222" stroke-width="0.8"/></svg>
<div class="a" style="left:1090px;top:89px;width:363px;height:1px;background:#424242"></div>
<div class="a" style="left:1090px;top:90px;width:363px;height:1px;background:#666"></div>
<div class="a" style="left:1090px;top:94px;width:363px;height:20px;background:#333333;border-radius:5px"></div>
<div class="t" style="left:1096px;top:97px;color:#9a9a9a;font-style:italic">Search</div>
<svg class="a" style="left:1436px;top:97px" width="13" height="14" viewBox="0 0 13 14"><circle cx="8" cy="5.5" r="4" fill="none" stroke="#8a8a8a" stroke-width="1.4"/><path d="M5 8.5 L1 12.5" stroke="#8a8a8a" stroke-width="1.8" stroke-linecap="round"/></svg>

<div class="a" style="left:1086px;top:120px;width:353px;height:18px;background:#5a5a5a;border-radius:4px"></div><svg class="a" style="left:1095px;top:125px" width="7" height="8"><path d="M0 0 L6 4 L0 8 Z" fill="#a8a8a8"/></svg><div class="t" style="left:1106px;top:122px;font-size:12px;color:#f2f2f2">Brushes</div>
<div class="a" style="left:1086px;top:141px;width:353px;height:18px;background:#5a5a5a;border-radius:4px"></div><svg class="a" style="left:1095px;top:146px" width="7" height="8"><path d="M0 0 L6 4 L0 8 Z" fill="#a8a8a8"/></svg><div class="t" style="left:1106px;top:143px;font-size:12px;color:#f2f2f2">Appearance</div>
<div class="a" style="left:1086px;top:162px;width:353px;height:257px;background:#5a5a5a;border-radius:4px"></div><svg class="a" style="left:1094px;top:168px" width="8" height="7"><path d="M0 0 L7 0 L3.5 6 Z" fill="#a8a8a8"/></svg><div class="t" style="left:1106px;top:164px;font-size:12px;color:#f2f2f2">Layout</div>
<div class="t" style="right:233px;top:186px;font-size:11px;color:#e8e8e8">Width</div><div class="a" style="left:1227px;top:182px;width:176px;height:20px;background:#333333;border-radius:4px"></div><div class="t" style="left:1232px;top:186px;color:#f0f0f0">Auto (84)</div>
<div class="t" style="right:233px;top:210px;font-size:11px;color:#e8e8e8">Height</div><div class="a" style="left:1227px;top:206px;width:176px;height:20px;background:#333333;border-radius:4px"></div><div class="t" style="left:1232px;top:210px;color:#f0f0f0">Auto (84)</div>
<svg class="a" style="left:1407px;top:186px" width="11" height="12" viewBox="0 0 11 12"><rect x="0" y="0" width="11" height="11" fill="#e0e0e0"/><rect x="0" y="11" width="11" height="1" fill="#222"/><path d="M2 9 L9 2 M2 5 L2 9 L6 9 M5 2 L9 2 L9 6" fill="none" stroke="#333" stroke-width="1.2"/></svg><div class="a" style="left:1426px;top:188.5px;width:7px;height:7px;border:1px solid #474747"></div><svg class="a" style="left:1407px;top:210px" width="11" height="12" viewBox="0 0 11 12"><rect x="0" y="0" width="11" height="11" fill="#e0e0e0"/><rect x="0" y="11" width="11" height="1" fill="#222"/><path d="M2 9 L9 2 M2 5 L2 9 L6 9 M5 2 L9 2 L9 6" fill="none" stroke="#333" stroke-width="1.2"/></svg><div class="a" style="left:1426px;top:212.5px;width:7px;height:7px;border:1px solid #474747"></div>
<div class="t" style="right:302px;top:234px;font-size:11px;color:#e8e8e8">Row</div><div class="a" style="left:1158px;top:230px;width:93px;height:20px;background:#333333;border-radius:4px"></div><div class="t" style="left:1163px;top:234px;color:#f0f0f0">0</div><div class="a" style="left:1254px;top:236.5px;width:7px;height:7px;border:1px solid #474747"></div><div class="t" style="right:127px;top:234px;font-size:11px;color:#e8e8e8">RowSpan</div><div class="a" style="left:1333px;top:230px;width:90px;height:20px;background:#333333;border-radius:4px"></div><div class="t" style="left:1338px;top:234px;color:#f0f0f0">1</div><div class="a" style="left:1426px;top:236.5px;width:7px;height:7px;border:1px solid #474747"></div>
<div class="t" style="right:302px;top:258px;font-size:11px;color:#e8e8e8">Column</div><div class="a" style="left:1158px;top:254px;width:93px;height:20px;background:#333333;border-radius:4px"></div><div class="t" style="left:1163px;top:258px;color:#f0f0f0">0</div><div class="a" style="left:1254px;top:260.5px;width:7px;height:7px;border:1px solid #474747"></div><div class="t" style="right:127px;top:258px;font-size:11px;color:#e8e8e8">ColumnSp...</div><div class="a" style="left:1333px;top:254px;width:90px;height:20px;background:#333333;border-radius:4px"></div><div class="t" style="left:1338px;top:258px;color:#f0f0f0">1</div><div class="a" style="left:1426px;top:260.5px;width:7px;height:7px;border:1px solid #474747"></div>
<div class="t" style="right:233px;top:282px;font-size:11px;color:#e8e8e8">ZIndex</div><div class="a" style="left:1227px;top:278px;width:196px;height:20px;background:#333333;border-radius:4px"></div><div class="t" style="left:1232px;top:282px;color:#f0f0f0">0</div><div class="a" style="left:1426px;top:284.5px;width:7px;height:7px;border:1px solid #474747"></div>
<div class="t" style="right:233px;top:307px;font-size:11.5px;color:#e8e8e8">HorizontalAlignment</div><div class="a" style="left:1426px;top:309.5px;width:7px;height:7px;border:1px solid #474747"></div>
<div class="t" style="right:233px;top:332px;font-size:11.5px;color:#e8e8e8">VerticalAlignment</div><div class="a" style="left:1427px;top:335px;width:6px;height:6px;background:#f4f4f4"></div>
<div class="a" style="left:1229px;top:302px;width:101px;height:21px;background:#3a3a3a;border-radius:2px"></div><div class="a" style="left:1230px;top:303px;width:24px;height:19px;background:#5a5a5a"></div><svg class="a" style="left:1234px;top:305px" width="16" height="15" viewBox="0 0 16 15"><path d="M2 1 L2 14" stroke="#222" stroke-width="1.4"/><rect x="3" y="3" width="9" height="3" fill="#c8c8c8" stroke="#222" stroke-width="0.8"/><rect x="3" y="8" width="6" height="3" fill="#c8c8c8" stroke="#222" stroke-width="0.8"/></svg><div class="a" style="left:1255px;top:303px;width:24px;height:19px;background:#5a5a5a"></div><svg class="a" style="left:1259px;top:305px" width="16" height="15" viewBox="0 0 16 15"><path d="M8 1 L8 14" stroke="#222" stroke-width="1.4"/><rect x="3" y="3" width="10" height="3" fill="#c8c8c8" stroke="#222" stroke-width="0.8"/><rect x="4.5" y="8" width="7" height="3" fill="#c8c8c8" stroke="#222" stroke-width="0.8"/></svg><div class="a" style="left:1280px;top:303px;width:24px;height:19px;background:#5a5a5a"></div><svg class="a" style="left:1284px;top:305px" width="16" height="15" viewBox="0 0 16 15"><path d="M14 1 L14 14" stroke="#222" stroke-width="1.4"/><rect x="4" y="3" width="9" height="3" fill="#c8c8c8" stroke="#222" stroke-width="0.8"/><rect x="7" y="8" width="6" height="3" fill="#c8c8c8" stroke="#222" stroke-width="0.8"/></svg><div class="a" style="left:1305px;top:303px;width:24px;height:19px;background:#c8c8c8"></div><svg class="a" style="left:1309px;top:305px" width="16" height="15" viewBox="0 0 16 15"><path d="M2 1 L2 14 M14 1 L14 14" stroke="#222" stroke-width="1.4"/><rect x="3.5" y="3" width="9" height="3.5" fill="#6a8ad0" stroke="#222" stroke-width="0.8"/><rect x="3.5" y="8" width="9" height="3.5" fill="#6a8ad0" stroke="#222" stroke-width="0.8"/></svg>
<div class="a" style="left:1229px;top:328px;width:101px;height:21px;background:#3a3a3a;border-radius:2px"></div><div class="a" style="left:1230px;top:329px;width:24px;height:19px;background:#c8c8c8"></div><svg class="a" style="left:1234px;top:331px" width="16" height="15" viewBox="0 0 16 15"><path d="M1 2 L15 2" stroke="#222" stroke-width="1.4"/><rect x="3" y="3" width="3.5" height="10" fill="#6a8ad0" stroke="#222" stroke-width="0.8"/><rect x="8.5" y="3" width="3.5" height="6" fill="#6a8ad0" stroke="#222" stroke-width="0.8"/></svg><div class="a" style="left:1255px;top:329px;width:24px;height:19px;background:#5a5a5a"></div><svg class="a" style="left:1259px;top:331px" width="16" height="15" viewBox="0 0 16 15"><path d="M1 7.5 L15 7.5" stroke="#222" stroke-width="1.4"/><rect x="4" y="2" width="3" height="11" fill="#c8c8c8" stroke="#222" stroke-width="0.8"/><rect x="9" y="4" width="3" height="7" fill="#c8c8c8" stroke="#222" stroke-width="0.8"/></svg><div class="a" style="left:1280px;top:329px;width:24px;height:19px;background:#5a5a5a"></div><svg class="a" style="left:1284px;top:331px" width="16" height="15" viewBox="0 0 16 15"><path d="M1 13 L15 13" stroke="#222" stroke-width="1.4"/><rect x="4" y="2" width="3" height="10" fill="#c8c8c8" stroke="#222" stroke-width="0.8"/><rect x="9" y="6" width="3" height="6" fill="#c8c8c8" stroke="#222" stroke-width="0.8"/></svg><div class="a" style="left:1305px;top:329px;width:24px;height:19px;background:#5a5a5a"></div><svg class="a" style="left:1309px;top:331px" width="16" height="15" viewBox="0 0 16 15"><path d="M1 2 L15 2 M1 13 L15 13" stroke="#222" stroke-width="1.4"/><rect x="4" y="3.5" width="3" height="8" fill="#c8c8c8" stroke="#222" stroke-width="0.8"/><rect x="9" y="3.5" width="3" height="8" fill="#c8c8c8" stroke="#222" stroke-width="0.8"/></svg>
<div class="t" style="right:233px;top:358px;font-size:11px;color:#e8e8e8">Margin</div><div class="a" style="left:1227px;top:354px;width:98px;height:20px;background:#333333;border-radius:4px;overflow:hidden"><div class="a" style="left:0;top:0;width:15px;height:20px;background:#1e1e1e"></div></div><svg class="a" style="left:1230px;top:359px" width="9" height="9"><path d="M1 4.5 L4.5 1 L4.5 3 L8 3 L8 6 L4.5 6 L4.5 8 Z" fill="#f0f0f0"/></svg><div class="t" style="left:1246px;top:358px;color:#f0f0f0">262</div><div class="a" style="left:1329px;top:354px;width:94px;height:20px;background:#333333;border-radius:4px;overflow:hidden"><div class="a" style="left:0;top:0;width:15px;height:20px;background:#1e1e1e"></div></div><svg class="a" style="left:1332px;top:359px" width="9" height="9"><path d="M8 4.5 L4.5 1 L4.5 3 L1 3 L1 6 L4.5 6 L4.5 8 Z" fill="#f0f0f0"/></svg><div class="t" style="left:1348px;top:358px;color:#f0f0f0">294</div><div class="a" style="left:1227px;top:378px;width:98px;height:20px;background:#333333;border-radius:4px;overflow:hidden"><div class="a" style="left:0;top:0;width:15px;height:20px;background:#1e1e1e"></div></div><svg class="a" style="left:1230px;top:383px" width="9" height="9"><path d="M4.5 1 L8 4.5 L6 4.5 L6 8 L3 8 L3 4.5 L1 4.5 Z" fill="#f0f0f0"/></svg><div class="t" style="left:1246px;top:382px;color:#f0f0f0">296</div><div class="a" style="left:1329px;top:378px;width:94px;height:20px;background:#333333;border-radius:4px;overflow:hidden"><div class="a" style="left:0;top:0;width:15px;height:20px;background:#1e1e1e"></div></div><svg class="a" style="left:1332px;top:383px" width="9" height="9"><path d="M4.5 8 L8 4.5 L6 4.5 L6 1 L3 1 L3 4.5 L1 4.5 Z" fill="#f0f0f0"/></svg><div class="t" style="left:1348px;top:382px;color:#f0f0f0">0</div><div class="a" style="left:1427px;top:373px;width:6px;height:6px;background:#f4f4f4"></div>
<div class="a" style="left:1086px;top:403px;width:353px;height:1px;background:#4a4a4a"></div>
<svg class="a" style="left:1256px;top:406px" width="11" height="10" viewBox="0 0 11 10"><path d="M1.5 1 L5.5 4.5 L9.5 1 M1.5 5 L5.5 8.5 L9.5 5" fill="none" stroke="#1a1a1a" stroke-width="2.4"/><path d="M1.5 1 L5.5 4.5 L9.5 1 M1.5 5 L5.5 8.5 L9.5 5" fill="none" stroke="#e0e0e0" stroke-width="1"/></svg>
<div class="a" style="left:1086px;top:421px;width:353px;height:18px;background:#5a5a5a;border-radius:4px"></div><svg class="a" style="left:1095px;top:426px" width="7" height="8"><path d="M0 0 L6 4 L0 8 Z" fill="#a8a8a8"/></svg><div class="t" style="left:1106px;top:423px;font-size:12px;color:#f2f2f2">Common Properties</div>
<div class="a" style="left:1086px;top:442px;width:353px;height:18px;background:#5a5a5a;border-radius:4px"></div><svg class="a" style="left:1095px;top:447px" width="7" height="8"><path d="M0 0 L6 4 L0 8 Z" fill="#a8a8a8"/></svg><div class="t" style="left:1106px;top:444px;font-size:12px;color:#f2f2f2">Text</div>
<div class="a" style="left:1086px;top:463px;width:353px;height:18px;background:#5a5a5a;border-radius:4px"></div><svg class="a" style="left:1095px;top:468px" width="7" height="8"><path d="M0 0 L6 4 L0 8 Z" fill="#a8a8a8"/></svg><div class="t" style="left:1106px;top:465px;font-size:12px;color:#f2f2f2">Transform</div>
<div class="a" style="left:1086px;top:484px;width:353px;height:18px;background:#5a5a5a;border-radius:4px"></div><svg class="a" style="left:1095px;top:489px" width="7" height="8"><path d="M0 0 L6 4 L0 8 Z" fill="#a8a8a8"/></svg><div class="t" style="left:1106px;top:486px;font-size:12px;color:#f2f2f2">Miscellaneous</div>
<div class="a" style="left:1086px;top:505px;width:353px;height:286px;background:#5a5a5a;border-radius:4px"></div><svg class="a" style="left:1094px;top:511px" width="8" height="7"><path d="M0 0 L7 0 L3.5 6 Z" fill="#a8a8a8"/></svg><div class="t" style="left:1106px;top:507px;font-size:12px;color:#f2f2f2">WF2010 Silverlight Controls</div>
<div class="t" style="right:233px;top:529px;font-size:11px;color:#e8e8e8">LineThickness</div><div class="a" style="left:1227px;top:525px;width:196px;height:20px;background:#333333;border-radius:4px"></div><div class="t" style="left:1232px;top:529px;color:#f0f0f0">2</div><div class="a" style="left:1426px;top:531.5px;width:7px;height:7px;border:1px solid #474747"></div>
<div class="t" style="right:233px;top:553px;font-size:11px;color:#e8e8e8">ObjectID</div><div class="a" style="left:1227px;top:549px;width:190px;height:20px;background:#333333;border-radius:4px"></div><svg class="a" style="left:1417px;top:556px" width="6" height="4"><path d="M0 0 L5 0 L2.5 3.5 Z" fill="#aaa"/></svg><div class="a" style="left:1426px;top:555.5px;width:7px;height:7px;border:1px solid #474747"></div>
<div class="t" style="right:233px;top:577px;font-size:11px;color:#e8e8e8">PopupModality</div><div class="a" style="left:1227px;top:573px;width:196px;height:20px;background:#333333;border-radius:4px"></div><div class="t" style="left:1232px;top:577px;color:#f0f0f0">Modeless</div><div class="a" style="left:1408px;top:575px;width:14px;height:16px;background:#7a7a7a;border-radius:2px"></div><svg class="a" style="left:1410px;top:580px" width="10" height="7"><path d="M1 1 L5 5 L9 1" fill="none" stroke="#f4f4f4" stroke-width="1.6"/></svg><div class="a" style="left:1426px;top:579.5px;width:7px;height:7px;border:1px solid #474747"></div>
<div class="t" style="right:233px;top:601px;font-size:11px;color:#e8e8e8">PopupParameters</div><div class="t" style="left:1227px;top:601px;color:#ececec">(Collection)</div><div class="a" style="left:1373px;top:597px;width:50px;height:20px;border:1px solid #2e2e2e;border-radius:4px"></div><div class="t" style="left:1373px;top:598px;width:50px;text-align:center;color:#f0f0f0">...</div><div class="a" style="left:1427px;top:604px;width:6px;height:6px;background:#f4f4f4"></div>
<div class="t" style="right:233px;top:625px;font-size:11px;color:#e8e8e8">PopupSource</div><div class="a" style="left:1227px;top:621px;width:196px;height:20px;background:#333333;border-radius:4px"></div><div class="t" style="left:1232px;top:625px;color:#f0f0f0">ParametersInPopups.Status</div><div class="a" style="left:1427px;top:628px;width:6px;height:6px;background:#f4f4f4"></div>
<div class="t" style="right:233px;top:649px;font-size:11px;color:#e8e8e8">PopupTitle</div><div class="a" style="left:1227px;top:645px;width:196px;height:20px;background:#333333;border-radius:4px"></div><div class="t" style="left:1232px;top:649px;color:#f0f0f0">Status</div><div class="a" style="left:1427px;top:652px;width:6px;height:6px;background:#f4f4f4"></div>
<div class="t" style="right:233px;top:673px;font-size:11.5px;color:#e8e8e8">SecurityAuthorizationN...</div><div class="a" style="left:1227px;top:669px;width:190px;height:20px;background:#333333;border-radius:4px"></div><svg class="a" style="left:1417px;top:676px" width="6" height="4"><path d="M0 0 L5 0 L2.5 3.5 Z" fill="#aaa"/></svg><div class="a" style="left:1426px;top:675.5px;width:7px;height:7px;border:1px solid #474747"></div>
<div class="t" style="right:233px;top:697px;font-size:11px;color:#e8e8e8">SecurityDenyAccessBeh...</div><div class="a" style="left:1227px;top:693px;width:196px;height:20px;background:#333333;border-radius:4px"></div><div class="t" style="left:1232px;top:697px;color:#f0f0f0">Hide</div><div class="a" style="left:1408px;top:695px;width:14px;height:16px;background:#7a7a7a;border-radius:2px"></div><svg class="a" style="left:1410px;top:700px" width="10" height="7"><path d="M1 1 L5 5 L9 1" fill="none" stroke="#f4f4f4" stroke-width="1.6"/></svg><div class="a" style="left:1426px;top:699.5px;width:7px;height:7px;border:1px solid #474747"></div>
<div class="t" style="right:233px;top:721px;font-size:11px;color:#e8e8e8">ShowPopup</div><div class="a" style="left:1227px;top:722px;width:12px;height:11px;background:#4a4a4a;border:1px solid #333"></div><svg class="a" style="left:1228px;top:721px" width="11" height="12"><path d="M2 6 L4.5 9.5 L9 1.5" fill="none" stroke="#f4f4f4" stroke-width="1.5"/></svg><div class="a" style="left:1426px;top:723.5px;width:7px;height:7px;border:1px solid #474747"></div>
<div class="t" style="right:233px;top:745px;font-size:11px;color:#e8e8e8">SignalPrefix</div><div class="a" style="left:1227px;top:741px;width:196px;height:20px;background:#333333;border-radius:4px"></div><div class="a" style="left:1408px;top:743px;width:14px;height:16px;background:#7a7a7a;border-radius:2px"></div><svg class="a" style="left:1410px;top:748px" width="10" height="7"><path d="M1 1 L5 5 L9 1" fill="none" stroke="#f4f4f4" stroke-width="1.6"/></svg><div class="a" style="left:1426px;top:747.5px;width:7px;height:7px;border:1px solid #474747"></div>
<div class="t" style="right:233px;top:769px;font-size:11px;color:#e8e8e8">States</div><div class="t" style="left:1227px;top:769px;color:#ececec">(Collection)</div><div class="a" style="left:1373px;top:765px;width:50px;height:20px;border:1px solid #2e2e2e;border-radius:4px"></div><div class="t" style="left:1373px;top:766px;width:50px;text-align:center;color:#f0f0f0">...</div><div class="a" style="left:1426px;top:771.5px;width:7px;height:7px;border:1px solid #474747"></div>
</body></html>
